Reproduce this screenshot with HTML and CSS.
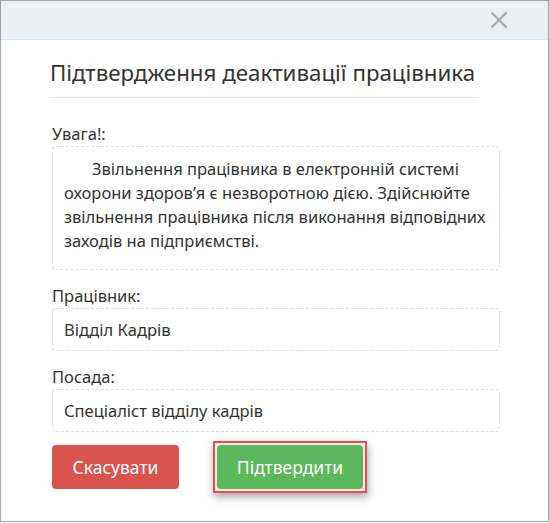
FILE: index.html
```html
<!DOCTYPE html>
<html lang="uk">
<head>
  <meta charset="UTF-8">
  <meta name="viewport" content="width=device-width, initial-scale=1.0">
  <title>Підтвердження деактивації працівника</title>
  <link rel="stylesheet" href="styles.css">
</head>
<body>
  <div class="window">
    <div class="window-header">
      <button type="button" class="close-btn" aria-label="Закрити">
        <svg width="18" height="18" viewBox="0 0 18 18">
          <path d="M1.5 1.5 L16.5 16.5 M16.5 1.5 L1.5 16.5" stroke="#a5aebb" stroke-width="2.4" fill="none"/>
        </svg>
      </button>
    </div>
    <div class="window-body">
      <h2 class="title">Підтвердження деактивації працівника</h2>
      <hr class="divider">

      <div class="field">
        <div class="field-label">Увага!:</div>
        <div class="field-box warning">Звільнення працівника в електронній системі охорони здоров’я є незворотною дією. Здійснюйте звільнення працівника після виконання відповідних заходів на підприємстві.</div>
      </div>

      <div class="field">
        <div class="field-label">Працівник:</div>
        <div class="field-box">Відділ Кадрів</div>
      </div>

      <div class="field">
        <div class="field-label">Посада:</div>
        <div class="field-box">Спеціаліст відділу кадрів</div>
      </div>

      <div class="actions">
        <button type="button" class="btn btn-cancel">Скасувати</button>
        <span class="highlight">
          <button type="button" class="btn btn-confirm">Підтвердити</button>
        </span>
      </div>
    </div>
  </div>
</body>
</html>
```

FILE: styles.css
```css
body {
  margin: 0;
  background: #fff;
  font-family: "Noto Sans", "Open Sans", sans-serif;
  color: #333;
}
.window {
  width: 549px;
  height: 522px;
  box-sizing: border-box;
  border: 1px solid #a3a3a3;
  background: #fff;
}
.window-header {
  height: 38px;
  background: #eceff3;
  border-bottom: 1px solid #dfe3e8;
  display: flex;
  justify-content: flex-end;
  align-items: center;
}
.close-btn {
  background: none;
  border: none;
  padding: 0;
  margin-right: 40px;
  width: 18px;
  height: 18px;
  cursor: pointer;
}
.close-btn svg {
  display: block;
}
.window-body {
  padding: 17px 48px 0 49px;
}
.title {
  margin: 0;
  font-size: 22.3px;
  line-height: 32px;
  font-weight: 400;
  color: #333;
  white-space: nowrap;
}
.divider {
  margin: 8px 22px 0 0;
  border: none;
  border-top: 1px solid #e0e0e0;
}
.field {
  margin-top: 15px;
  padding-left: 2px;
}
.field:first-of-type {
  margin-top: 25px;
}
.field-label {
  font-size: 16.5px;
  line-height: 22px;
  margin-bottom: 1px;
}
.field-box {
  border: 1px dashed #ddd;
  border-radius: 4px;
  padding: 10px 11px;
  font-size: 16.5px;
  line-height: 21px;
}
.warning {
  padding: 10px 11px 16px;
  line-height: 24px;
  text-indent: 28px;
}
.actions {
  display: flex;
  align-items: center;
  gap: 34px;
  margin-top: 9px;
  padding-left: 2px;
}
.btn {
  height: 44px;
  border: none;
  border-radius: 4px;
  color: #fff;
  font-family: inherit;
  font-size: 17.5px;
  cursor: pointer;
}
.btn-cancel {
  width: 127px;
  background: #d9534f;
}
.highlight {
  display: flex;
  padding: 2px;
  border: 2px solid #f2494a;
  background: #ececec;
  box-shadow: 1px 4px 8px rgba(0, 0, 0, 0.35);
}
.btn-confirm {
  width: 146px;
  background: #5cb85c;
  display: block;
}
```
